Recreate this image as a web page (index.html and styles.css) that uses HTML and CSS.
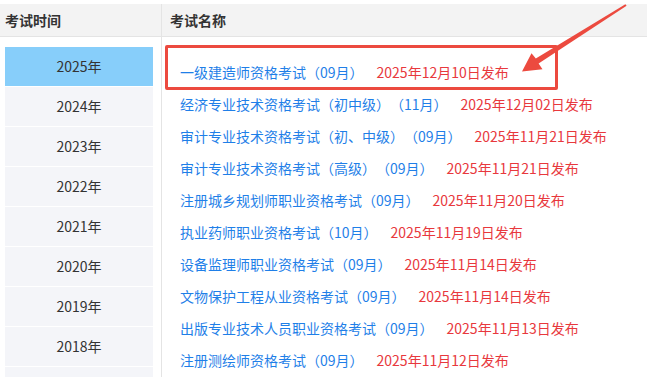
FILE: index.html
```html
<!DOCTYPE html>
<html>
<head>
    <meta name="viewport" content="width=device-width, initial-scale=1">
    <link rel="stylesheet" href="styles.css">
</head>
<body>
    <div class="exam-table">
        <div class="head-cell head-time">考试时间</div>
        <div class="head-cell head-name">考试名称</div>

        <div class="years">
            <div class="year active">2025年</div>
            <div class="year">2024年</div>
            <div class="year">2023年</div>
            <div class="year">2022年</div>
            <div class="year">2021年</div>
            <div class="year">2020年</div>
            <div class="year">2019年</div>
            <div class="year">2018年</div>
            <div class="year"></div>
        </div>

        <div class="exams">
            <div class="exam marked">
                <a class="exam-name">一级建造师资格考试（09月）</a>
                <span class="exam-date">2025年12月10日发布</span>
                <span class="mark-box"></span>
            </div>
            <div class="exam">
                <a class="exam-name">经济专业技术资格考试（初中级）（11月）</a>
                <span class="exam-date">2025年12月02日发布</span>
            </div>
            <div class="exam">
                <a class="exam-name">审计专业技术资格考试（初、中级）（09月）</a>
                <span class="exam-date">2025年11月21日发布</span>
            </div>
            <div class="exam">
                <a class="exam-name">审计专业技术资格考试（高级）（09月）</a>
                <span class="exam-date">2025年11月21日发布</span>
            </div>
            <div class="exam">
                <a class="exam-name">注册城乡规划师职业资格考试（09月）</a>
                <span class="exam-date">2025年11月20日发布</span>
            </div>
            <div class="exam">
                <a class="exam-name">执业药师职业资格考试（10月）</a>
                <span class="exam-date">2025年11月19日发布</span>
            </div>
            <div class="exam">
                <a class="exam-name">设备监理师职业资格考试（09月）</a>
                <span class="exam-date">2025年11月14日发布</span>
            </div>
            <div class="exam">
                <a class="exam-name">文物保护工程从业资格考试（09月）</a>
                <span class="exam-date">2025年11月14日发布</span>
            </div>
            <div class="exam">
                <a class="exam-name">出版专业技术人员职业资格考试（09月）</a>
                <span class="exam-date">2025年11月13日发布</span>
            </div>
            <div class="exam">
                <a class="exam-name">注册测绘师资格考试（09月）</a>
                <span class="exam-date">2025年11月12日发布</span>
            </div>
        </div>
    </div>

    <!-- 标注箭头 -->
    <svg class="mark-arrow" width="647" height="384" viewBox="0 0 647 384">
        <polygon points="625.4,4.2 535.8,58.6 531.5,53.2 522,71.5 542.5,69.2 538.6,63.6 626.6,5.8" fill="#ec4a3f"/>
    </svg>
</body>
</html>
```

FILE: styles.css
```css
body {
    margin: 0;
    background-color: white;
    font-family: "Noto Sans CJK SC", "Liberation Sans", sans-serif;
    font-size: 14px;
    color: #333;
    text-spacing-trim: space-all;
}

.exam-table {
    display: grid;
    grid-template-columns: 162px 1fr;
    margin-top: 4px;
}

.head-cell {
    height: 32px;
    line-height: 32px;
    background-color: #f3f3f3;
    border-bottom: 1px solid #e4e4e4;
    font-weight: bold;
    color: #333;
}

.head-time {
    padding-left: 5px;
    border-right: 1px solid #e4e4e4;
}

.head-name {
    padding-left: 8px;
}

.years {
    height: 330px;
    overflow: hidden;
    padding: 10px 8px 0 5px;
    border-right: 1px solid #e4e4e4;
}

.year {
    height: 39px;
    line-height: 39px;
    margin-bottom: 1px;
    text-align: center;
    background-color: #f4f5f9;
}

.year.active {
    background-color: #87cefa;
}

.exams {
    height: 321px;
    overflow: hidden;
    padding: 19px 0 0 18px;
}

.exam {
    position: relative;
    display: flex;
    height: 32px;
    line-height: 32px;
    white-space: nowrap;
}

.exam-name {
    color: #1f7fe8;
    cursor: pointer;
}

.exam-date {
    margin-left: 13px;
    color: #e8383d;
}

/* 红框标注 */
.mark-box {
    position: absolute;
    left: -15px;
    top: -11px;
    width: 387px;
    height: 39px;
    border: 3px solid #ec4a3f;
    border-radius: 2px;
}

.mark-arrow {
    position: absolute;
    top: 0;
    left: 0;
    pointer-events: none;
}
```
